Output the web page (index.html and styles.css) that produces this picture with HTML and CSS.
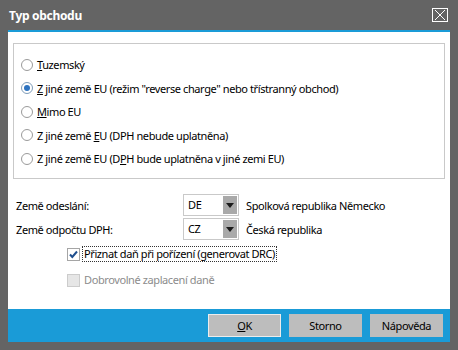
FILE: index.html
```html
<!DOCTYPE html>
<html lang="cs">
<head>
    <meta charset="UTF-8">
    <title>Typ obchodu</title>
    <link rel="stylesheet" href="styles.css">
</head>
<body>
    <div class="window">
        <div class="titlebar">
            <span class="title">Typ obchodu</span>
            <span class="close-btn">
                <svg width="14" height="12" viewBox="0 0 14 12"><path d="M2 1 L12 11 M12 1 L2 11" stroke="#fff" stroke-width="1" fill="none"/></svg>
            </span>
        </div>
        <div class="content">
            <div class="group">
                <label class="radio-row"><span class="radio"></span><span><u>T</u>uzemský</span></label>
                <label class="radio-row"><span class="radio checked"></span><span><u>Z</u> jiné země EU (režim "reverse charge" nebo třístranný obchod)</span></label>
                <label class="radio-row"><span class="radio"></span><span><u>M</u>imo EU</span></label>
                <label class="radio-row"><span class="radio"></span><span>Z jiné země <u>E</u>U (DPH nebude uplatněna)</span></label>
                <label class="radio-row"><span class="radio"></span><span>Z jiné země EU (D<u>P</u>H bude uplatněna v jiné zemi EU)</span></label>
            </div>

            <div class="fields">
                <div class="field-row">
                    <span class="field-label">Země odeslání:</span>
                    <span class="combo"><span class="combo-value">DE</span><span class="combo-arrow"></span></span>
                    <span class="field-desc">Spolková republika Německo</span>
                </div>
                <div class="field-row">
                    <span class="field-label">Země odpočtu DPH:</span>
                    <span class="combo"><span class="combo-value">CZ</span><span class="combo-arrow"></span></span>
                    <span class="field-desc">Česká republika</span>
                </div>
            </div>

            <div class="checks">
                <div class="check-row">
                    <span class="checkbox checked">
                        <svg width="11" height="11" viewBox="0 0 11 11"><path d="M2 5.5 L4.3 8 L9 2.5" stroke="#1f4f8f" stroke-width="2" fill="none"/></svg>
                    </span>
                    <span class="check-label focused">Přiznat daň při pořízení (generovat DRC)</span>
                </div>
                <div class="check-row disabled">
                    <span class="checkbox"></span>
                    <span class="check-label">Dobrovolné zaplacení daně</span>
                </div>
            </div>
        </div>
        <div class="footer">
            <button class="btn default"><u>O</u>K</button>
            <button class="btn">Storno</button>
            <button class="btn">Nápověda</button>
        </div>
    </div>
</body>
</html>
```

FILE: styles.css
```css
:root {
    --frame: #646464;
    --accent: #1a9bd7;
    --border-light: #c9c9c9;
    --button-bg: #bdbdbd;
    --text: #000000;
    --text-disabled: #8c8c8c;
}

* {
    margin: 0;
    padding: 0;
    box-sizing: border-box;
}

body {
    font-family: "Noto Sans", "Open Sans", sans-serif;
    font-size: 11px;
    letter-spacing: -0.4px;
    color: var(--text);
    background: #ffffff;
}

.window {
    width: 458px;
    height: 350px;
    background: var(--frame);
    padding: 0 8px 8px 8px;
    display: flex;
    flex-direction: column;
}

.titlebar {
    height: 30px;
    display: flex;
    align-items: flex-start;
    justify-content: space-between;
}

.title {
    color: #ffffff;
    font-weight: bold;
    font-size: 12px;
    letter-spacing: -0.3px;
    line-height: 16px;
    margin-top: 8px;
    padding-left: 1px;
}

.close-btn {
    width: 16px;
    height: 14px;
    margin-top: 8px;
    margin-right: 2px;
    border: 1px solid #ffffff;
    display: flex;
    align-items: center;
    justify-content: center;
}

.close-btn svg {
    display: block;
}

.content {
    flex: 1;
    background: #ffffff;
    border-top: 2px solid var(--accent);
    display: flex;
    flex-direction: column;
}

/* Radio group */
.group {
    margin: 11px 5px 0 5px;
    height: 136px;
    border: 1px solid var(--border-light);
    padding: 9px 0 0 7px;
    display: flex;
    flex-direction: column;
}

.radio-row {
    height: 23.5px;
    display: flex;
    align-items: center;
    gap: 4px;
    white-space: nowrap;
}

.radio {
    width: 12px;
    height: 12px;
    border: 1px solid #9a9a9a;
    border-radius: 50%;
    background: #ffffff;
    display: flex;
    align-items: center;
    justify-content: center;
    flex-shrink: 0;
}

.radio.checked {
    border-color: #7f9db9;
}

.radio.checked::after {
    content: '';
    width: 6px;
    height: 6px;
    border-radius: 50%;
    background: #2d73c0;
}

/* Country fields */
.fields {
    margin: 15px 0 0 8px;
    display: flex;
    flex-direction: column;
    gap: 2px;
}

.field-row {
    height: 22px;
    display: flex;
    align-items: center;
}

.field-label {
    width: 167px;
}

.combo {
    width: 56px;
    height: 22px;
    border: 1px solid var(--border-light);
    display: flex;
    align-items: stretch;
    padding: 1px;
}

.combo-value {
    flex: 1;
    padding-left: 3px;
    line-height: 18px;
}

.combo-arrow {
    width: 14px;
    background: #a9a9a9;
    display: flex;
    align-items: center;
    justify-content: center;
}

.combo-arrow::after {
    content: '';
    border-left: 4px solid transparent;
    border-right: 4px solid transparent;
    border-top: 5px solid #1a1a1a;
}

.field-desc {
    margin-left: 7px;
}

/* Checkboxes */
.checks {
    margin: 6px 0 0 59px;
    display: flex;
    flex-direction: column;
    gap: 10px;
}

.check-row {
    height: 16px;
    display: flex;
    align-items: center;
    gap: 2px;
}

.checkbox {
    width: 13px;
    height: 13px;
    border: 1px solid #a5a5a5;
    background: #ffffff;
    display: flex;
    align-items: center;
    justify-content: center;
}

.check-label {
    padding: 0 1px;
    line-height: 14px;
    border: 1px dotted transparent;
}

.check-label.focused {
    border-color: #333333;
}

.check-row.disabled .checkbox {
    background: #e6e6e6;
    border-color: #cccccc;
}

.check-row.disabled .check-label {
    color: var(--text-disabled);
}

/* Footer buttons */
.footer {
    height: 33px;
    background: var(--accent);
    display: flex;
    justify-content: flex-end;
    align-items: center;
    gap: 8px;
    padding-right: 7px;
}

.btn {
    width: 73px;
    height: 23px;
    background: var(--button-bg);
    border: 1px solid var(--button-bg);
    font-family: inherit;
    font-size: 11px;
    letter-spacing: -0.4px;
    color: var(--text);
}

.btn.default {
    border-color: #ececec;
}
```
